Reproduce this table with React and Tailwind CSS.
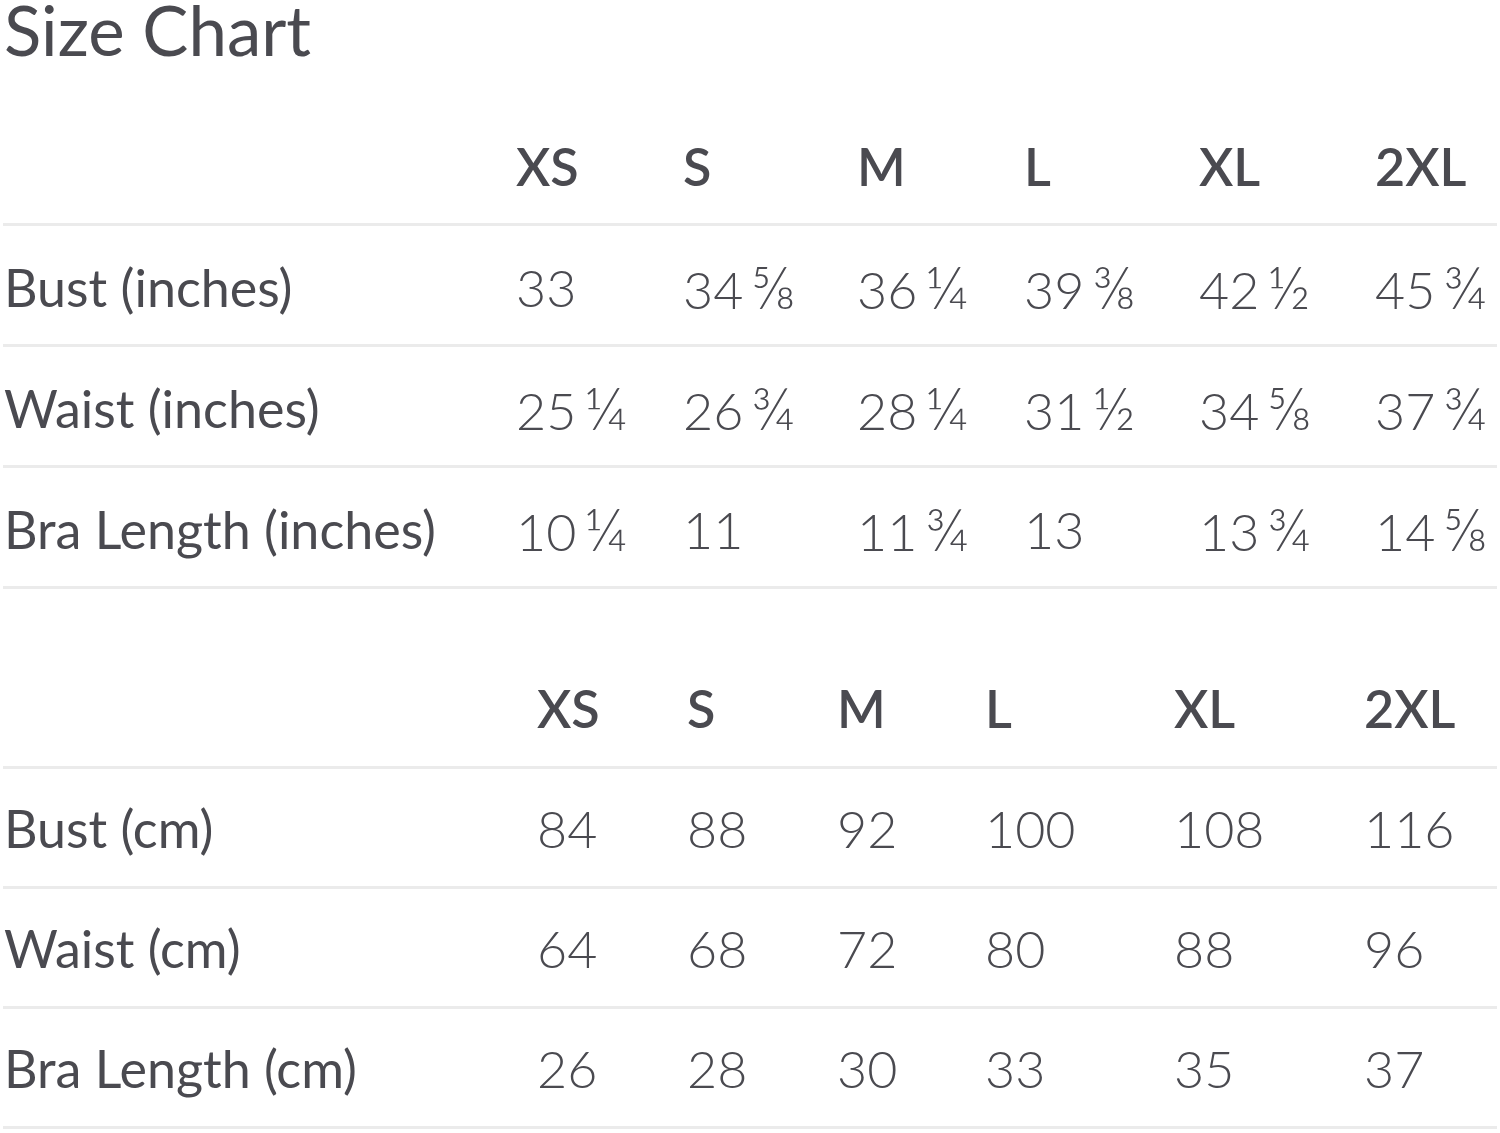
import React from "react";

const t1 = {
  cols: "grid-cols-[513px_167px_174px_167px_175px_176px_1fr]",
  rowH: "h-[121px]",
  sizes: ["XS", "S", "M", "L", "XL", "2XL"],
  rows: [
    ["Bust (inches)", [["33"], ["34", "⅝"], ["36", "¼"], ["39", "⅜"], ["42", "½"], ["45", "¾"]]],
    ["Waist (inches)", [["25", "¼"], ["26", "¾"], ["28", "¼"], ["31", "½"], ["34", "⅝"], ["37", "¾"]]],
    ["Bra Length (inches)", [["10", "¼"], ["11"], ["11", "¾"], ["13"], ["13", "¾"], ["14", "⅝"]]],
  ],
};

const t2 = {
  cols: "grid-cols-[534px_150px_150px_148px_189px_190px_1fr]",
  rowH: "h-[120px]",
  sizes: ["XS", "S", "M", "L", "XL", "2XL"],
  rows: [
    ["Bust (cm)", [["84"], ["88"], ["92"], ["100"], ["108"], ["116"]]],
    ["Waist (cm)", [["64"], ["68"], ["72"], ["80"], ["88"], ["96"]]],
    ["Bra Length (cm)", [["26"], ["28"], ["30"], ["33"], ["35"], ["37"]]],
  ],
};

function Value({ v }) {
  return (
    <div className="font-light whitespace-nowrap">
      {v[0]}
      {v[1] && <span className="ml-[8px] text-[60px]">{v[1]}</span>}
    </div>
  );
}

function Table({ data, pad }) {
  return (
    <div>
      <div className={`grid ${data.cols} h-[120px] items-center ${pad} border-b-[3px] border-[#ebebeb]`}>
        <div />
        {data.sizes.map((s) => (
          <div key={s} className="font-semibold">{s}</div>
        ))}
        <div />
      </div>
      {data.rows.map(([label, vals]) => (
        <div key={label} className={`grid ${data.cols} ${data.rowH} items-center ${pad} border-b-[3px] border-[#ebebeb]`}>
          <div className="pl-[1px] whitespace-nowrap">{label}</div>
          {vals.map((v, i) => (
            <Value key={i} v={v} />
          ))}
          <div />
        </div>
      ))}
    </div>
  );
}

export default function App() {
  return (
    <div className="w-[1500px] h-[1133px] bg-white overflow-hidden px-[3px] text-[#4a4a50] font-['Lato','Liberation_Sans',sans-serif] text-[52px] leading-[54px]">
      <div className="h-[106px] pl-[1px]">
        <div className="text-[69px] leading-[60px]">Size Chart</div>
      </div>
      <Table data={t1} pad="pt-[23px]" />
      <div className="h-[60px]" />
      <Table data={t2} pad="pt-[21px]" />
    </div>
  );
}
